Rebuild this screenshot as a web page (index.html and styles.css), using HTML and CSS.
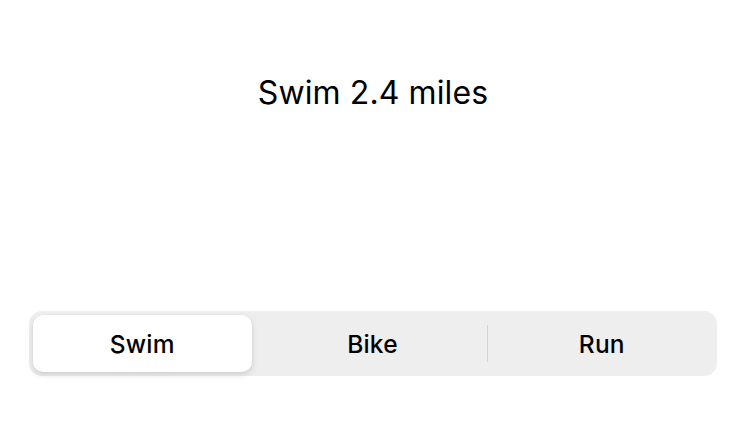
FILE: index.html
```html
<!DOCTYPE html>
<html>
<head>
<meta charset="utf-8">
<link rel="stylesheet" href="styles.css">
</head>
<body>
<main class="screen">
  <h1 class="title">Swim 2.4 miles</h1>
  <div class="segmented">
    <div class="segment selected">Swim</div>
    <div class="segment">Bike</div>
    <div class="segment divided">Run</div>
  </div>
</main>
</body>
</html>
```
FILE: styles.css
```css
html, body {
  margin: 0;
  padding: 0;
  background: #ffffff;
}
.screen {
  width: 740px;
  height: 444px;
  display: flex;
  flex-direction: column;
  align-items: center;
  font-family: Inter, "Liberation Sans", sans-serif;
  color: #000;
}
.title {
  margin: 74px 0 0 6px;
  font-size: 32px;
  font-weight: 400;
  line-height: 38px;
  letter-spacing: 0.1px;
}
.segmented {
  margin: 199px 0 0 5px;
  width: 688px;
  height: 65px;
  background: #eeeeef;
  border-radius: 13px;
  display: grid;
  grid-template-columns: repeat(3, 1fr);
}
.segment {
  position: relative;
  display: flex;
  align-items: center;
  justify-content: center;
  font-size: 24.5px;
  font-weight: 500;
  letter-spacing: 0.2px;
  border-radius: 10px;
}
.segment.selected {
  margin: 4px 6px 4px 4px;
  background: #ffffff;
  box-shadow: 0 3px 6px rgba(0,0,0,0.12), 0 0 0 0.5px rgba(0,0,0,0.04);
}
.segment.divided::before {
  content: "";
  position: absolute;
  left: 0;
  top: 14px;
  bottom: 14px;
  width: 1px;
  background: #d3d3d6;
}
```
